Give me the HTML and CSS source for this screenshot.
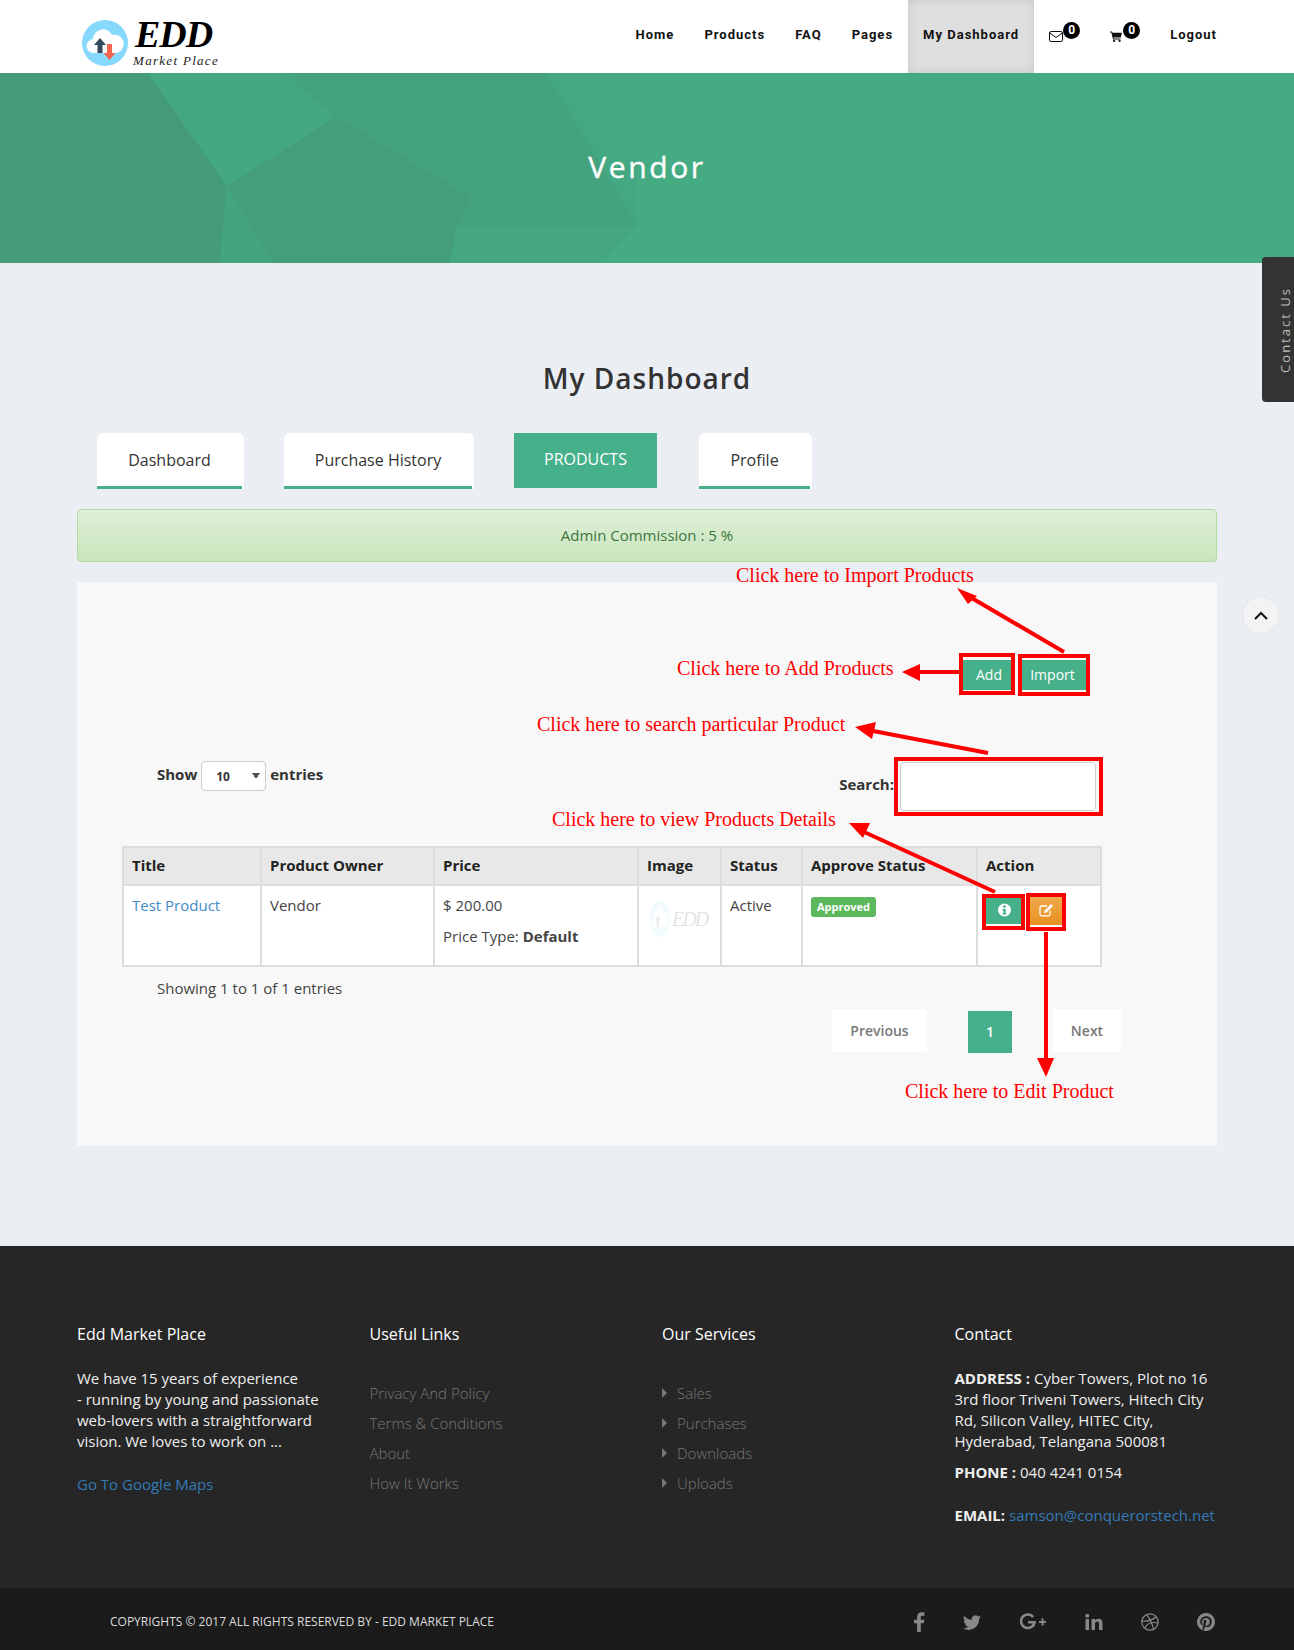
FILE: index.html
```html
<!DOCTYPE html>
<html>
<head>
	<title>EDD Market Place - Vendor</title>
	<link rel="stylesheet" href="styles.css">
</head>
<body>
	<header class="topbar">
		<a class="logo">
			<svg class="logo-mark" viewBox="0 0 46 46">
				<circle cx="23" cy="23" r="23" fill="#87d8fd"/>
				<path d="M12 33a7 7 0 0 1-1-14 10 10 0 0 1 19-4 9 9 0 0 1 5 18z" fill="#fff"/>
				<path d="M18 18l6 7h-3.500v8h-5v-8H12z" fill="#34495e"/>
				<path d="M25 24h5v9h3.500l-6 7-6-7H25z" fill="#f4644f"/>
			</svg>
			<span class="logo-text">
				<span class="logo-name">EDD</span>
				<span class="logo-sub">Market Place</span>
			</span>
		</a>
		<nav class="menu">
			<a class="menu-link">Home</a>
			<a class="menu-link">Products</a>
			<a class="menu-link">FAQ</a>
			<a class="menu-link">Pages</a>
			<a class="menu-link active">My Dashboard</a>
			<a class="menu-link">
				<svg class="menu-icon" viewBox="0 0 14 11"><rect x=".5" y=".5" width="13" height="10" rx="1.500" fill="none" stroke="#111"/><path d="M.8 2l6.200 4.500L13.200 2" fill="none" stroke="#111"/></svg>
				<span class="count count-mail">0</span>
			</a>
			<a class="menu-link">
				<svg class="menu-icon" viewBox="0 0 13 12" preserveAspectRatio="xMinYMid"><path d="M0 .5h2.300l.4 1.500H13l-1.200 5H3.900l.3 1.200h7.300v1H3.300L1.500 1.500H0z" fill="#111"/><circle cx="4.500" cy="10.800" r="1.200" fill="#111"/><circle cx="10.500" cy="10.800" r="1.200" fill="#111"/></svg>
				<span class="count count-cart">0</span>
			</a>
			<a class="menu-link">Logout</a>
		</nav>
	</header>

	<section class="hero">
		<svg class="hero-bg" viewBox="0 0 1294 190" preserveAspectRatio="none">
			<polygon points="0,0 148,0 227,113 220,190 0,190" fill="#459a79"/>
			<polygon points="148,0 285,0 336,44 227,113" fill="#43a880"/>
			<polygon points="227,113 220,190 273,190" fill="#43a47f"/>
			<polygon points="227,113 336,44 470,124 457,153 450,190 273,190" fill="#449d7b"/>
			<polygon points="285,0 546,0 638,153 457,153 470,124 336,44" fill="#44a27e"/>
			<polygon points="457,153 638,153 600,190 450,190" fill="#44a781"/>
			<polygon points="546,0 640,0 636,130 638,153" fill="#44a983"/>
		</svg>
		<h1 class="hero-title">Vendor</h1>
	</section>

	<main class="content">
		<h2 class="page-title">My Dashboard</h2>

		<div class="tabs">
			<a class="tab tab-dash">Dashboard</a>
			<a class="tab tab-history">Purchase History</a>
			<a class="tab-current">PRODUCTS</a>
			<a class="tab tab-profile">Profile</a>
		</div>

		<div class="commission">Admin Commission : 5 %</div>

		<section class="panel">
			<div class="panel-actions">
				<a class="btn-green btn-add">Add</a>
				<a class="btn-green btn-import">Import</a>
			</div>

			<div class="table-head">
				<label class="field-label">Show
					<select class="page-size"><option>10</option></select>
					entries</label>
				<label class="field-label search-label">Search:<input class="search-box" type="text"></label>
			</div>

			<table class="products">
				<colgroup>
					<col class="c-title"><col class="c-owner"><col class="c-price"><col class="c-image"><col class="c-status"><col class="c-approve"><col class="c-action">
				</colgroup>
				<thead>
					<tr>
						<th>Title</th>
						<th>Product Owner</th>
						<th>Price</th>
						<th>Image</th>
						<th>Status</th>
						<th>Approve Status</th>
						<th>Action</th>
					</tr>
				</thead>
				<tbody>
					<tr>
						<td><a class="link">Test Product</a></td>
						<td>Vendor</td>
						<td>
							<div>$ 200.00</div>
							<div class="price-type">Price Type: <b>Default</b></div>
						</td>
						<td class="thumb-cell">
							<div class="thumb">
								<svg class="thumb-mark" viewBox="0 0 46 46" preserveAspectRatio="none"><circle cx="23" cy="23" r="23" fill="#87d8fd"/><path d="M12 33a7 7 0 0 1-1-14 10 10 0 0 1 19-4 9 9 0 0 1 5 18z" fill="#fff"/><path d="M18 18l6 7h-3.500v8h-5v-8H12z" fill="#34495e"/></svg>
								<span class="thumb-name">EDD</span>
							</div>
						</td>
						<td>Active</td>
						<td><span class="approved">Approved</span></td>
						<td>
							<div class="row-actions">
								<a class="row-btn row-info">
									<svg class="row-icon" viewBox="0 0 14 14"><circle cx="7" cy="7" r="6.500" fill="#fff"/><path d="M5.600 2.600h2.600v2.100H5.600zM5 6h3.200v4.200H9v1.400H5v-1.400h.9V7.400H5z" fill="#45b08a"/></svg>
								</a>
								<a class="row-btn row-edit">
									<svg class="row-icon" viewBox="0 0 15 14"><path d="M11 8v3a1.800 1.800 0 0 1-1.800 1.800H2.800A1.800 1.800 0 0 1 1 11V4.800A1.800 1.800 0 0 1 2.800 3H8" fill="none" stroke="#fff" stroke-width="1.300"/><path d="M5 10l.6-2.600L12 1l2 2-6.400 6.400z" fill="#fff"/></svg>
								</a>
							</div>
						</td>
					</tr>
				</tbody>
			</table>

			<p class="showing">Showing 1 to 1 of 1 entries</p>

			<div class="pager">
				<a class="page-btn page-prev">Previous</a>
				<a class="page-num">1</a>
				<a class="page-btn page-next">Next</a>
			</div>
		</section>
	</main>

	<footer class="footer">
		<div class="footer-cols">
			<div class="footer-col">
				<h4 class="footer-title">Edd Market Place</h4>
				<p class="footer-text">We have 15 years of experience<br>- running by young and passionate<br>web-lovers with a straightforward<br>vision. We loves to work on ...</p>
				<a class="footer-map">Go To Google Maps</a>
			</div>
			<div class="footer-col">
				<h4 class="footer-title">Useful Links</h4>
				<ul class="footer-list">
					<li>Privacy And Policy</li>
					<li>Terms &amp; Conditions</li>
					<li>About</li>
					<li>How It Works</li>
				</ul>
			</div>
			<div class="footer-col">
				<h4 class="footer-title">Our Services</h4>
				<ul class="footer-list services">
					<li>Sales</li>
					<li>Purchases</li>
					<li>Downloads</li>
					<li>Uploads</li>
				</ul>
			</div>
			<div class="footer-col">
				<h4 class="footer-title">Contact</h4>
				<p class="footer-text"><b>ADDRESS :</b> Cyber Towers, Plot no 16<br>3rd floor Triveni Towers, Hitech City<br>Rd, Silicon Valley, HITEC City,<br>Hyderabad, Telangana 500081</p>
				<p class="footer-text phone"><b>PHONE :</b> 040 4241 0154</p>
				<p class="footer-text email"><b>EMAIL:</b> <a class="footer-mail">samson@conquerorstech.net</a></p>
			</div>
		</div>
		<div class="footer-bottom">
			<span class="copyright">COPYRIGHTS © 2017 ALL RIGHTS RESERVED BY - EDD MARKET PLACE</span>
			<div class="social">
				<svg class="soc soc-f" viewBox="0 0 10 17"><path d="M6.500 17V9.500h2.600l.4-3H6.500V4.700c0-.9.300-1.500 1.500-1.500h1.600V.5C9.300.4 8.400.3 7.300.3 5 .3 3.400 1.700 3.400 4.300v2.200H.8v3h2.600V17z"/></svg>
				<svg class="soc soc-t" viewBox="0 0 16 16"><path d="M5.026 15c6.038 0 9.341-5.003 9.341-9.334 0-.14 0-.282-.006-.422A6.685 6.685 0 0 0 16 3.542a6.658 6.658 0 0 1-1.889.518 3.301 3.301 0 0 0 1.447-1.817 6.533 6.533 0 0 1-2.087.793A3.286 3.286 0 0 0 7.875 6.030a9.325 9.325 0 0 1-6.767-3.429 3.289 3.289 0 0 0 1.018 4.382A3.323 3.323 0 0 1 .64 6.575v.045a3.288 3.288 0 0 0 2.632 3.218 3.203 3.203 0 0 1-.865.115 3.230 3.230 0 0 1-.614-.057 3.283 3.283 0 0 0 3.067 2.277A6.588 6.588 0 0 1 .78 13.580a6.320 6.320 0 0 1-.78-.045A9.344 9.344 0 0 0 5.026 15z"/></svg>
				<svg class="soc soc-g" viewBox="0 0 27 17"><path d="M13.200 3.500A6.800 6.800 0 1 0 14.600 8.800H8" fill="none" stroke="#888" stroke-width="2.500"/><path d="M19 8.500h7M22.500 5v7" fill="none" stroke="#888" stroke-width="2"/></svg>
				<svg class="soc soc-in" viewBox="0 0 18 17"><rect x=".5" y="5.500" width="3.500" height="11"/><circle cx="2.250" cy="2.200" r="2"/><path d="M6.500 5.500H10V7c.6-1 1.800-1.800 3.500-1.800 3 0 4 1.900 4 4.800v6.500H14v-6c0-1.400-.4-2.400-1.800-2.400-1.500 0-2.200 1.100-2.200 2.500v5.900H6.500z"/></svg>
				<svg class="soc soc-d" viewBox="0 0 18 18"><g fill="none" stroke="#888" stroke-width="1.200"><circle cx="9" cy="9" r="8.200"/><path d="M5.500 1.700c3 3.500 6 9 7 15"/><path d="M1 8.200c5 .3 10-.6 13.500-4.200"/><path d="M3.700 15c2-4 6.500-6.500 13.300-5"/></g></svg>
				<svg class="soc soc-p" viewBox="0 0 16 16"><path d="M8 0a8 8 0 0 0-2.915 15.452c-.07-.633-.134-1.606.027-2.297.146-.625.938-3.977.938-3.977s-.239-.479-.239-1.187c0-1.113.645-1.943 1.448-1.943.682 0 1.012.512 1.012 1.127 0 .686-.437 1.712-.663 2.663-.188.796.4 1.446 1.185 1.446 1.422 0 2.515-1.500 2.515-3.664 0-1.915-1.377-3.254-3.342-3.254-2.276 0-3.612 1.707-3.612 3.471 0 .688.265 1.425.595 1.826a.24.24 0 0 1 .056.23c-.061.252-.196.796-.222.907-.035.146-.116.177-.268.107-1-.465-1.624-1.926-1.624-3.100 0-2.523 1.834-4.840 5.286-4.840 2.775 0 4.932 1.977 4.932 4.620 0 2.757-1.739 4.976-4.151 4.976-.811 0-1.573-.421-1.834-.919l-.498 1.902c-.181.695-.669 1.566-.995 2.097A8 8 0 1 0 8 0z"/></svg>
			</div>
		</div>
	</footer>

	<!-- floating bits -->
	<a class="contact-tab"><span class="contact-label">Contact Us</span></a>
	<a class="to-top">
		<svg class="to-top-icon" viewBox="0 0 14 9"><path d="M1 8l6-6 6 6" fill="none" stroke="#111" stroke-width="2"/></svg>
	</a>

	<!-- red annotations drawn over the screenshot -->
	<svg class="marks" viewBox="0 0 1294 1650">
		<g fill="none" stroke="#f00" stroke-width="4">
			<rect x="961" y="655" width="52" height="38"/>
			<rect x="1020" y="656" width="68" height="38"/>
			<rect x="896" y="759" width="205" height="55"/>
			<rect x="984" y="896" width="39" height="32"/>
			<rect x="1028" y="895" width="36" height="34"/>
			<path d="M1064 652L970 597"/>
			<path d="M959 672H915"/>
			<path d="M988 753L868 730"/>
			<path d="M995 892L862 831"/>
			<path d="M1046 932V1060"/>
		</g>
		<g fill="#f00">
			<polygon points="957,588 977,596 968,604"/>
			<polygon points="902,672 920,664 920,681"/>
			<polygon points="855,727 876,722 872,739"/>
			<polygon points="849,823 870,823 863,838"/>
			<polygon points="1046,1077 1037,1058 1054,1058"/>
		</g>
	</svg>
	<span class="note note-import">Click here to Import Products</span>
	<span class="note note-add">Click here to Add Products</span>
	<span class="note note-search">Click here to search particular Product</span>
	<span class="note note-view">Click here to view Products Details</span>
	<span class="note note-edit">Click here to Edit Product</span>
</body>
</html>
```

FILE: styles.css
```css
* {
	box-sizing: border-box;
}

body {
	background-color: #ebeef3;
	color: #444;
	font-family: "Open Sans", sans-serif;
	font-size: 15px;
	margin: 0;
	position: relative;
	width: 1294px;
}

/* header */
.topbar {
	align-items: stretch;
	background-color: #fff;
	display: flex;
	height: 73px;
	justify-content: space-between;
	padding: 0 62px 0 82px;
}

.logo {
	align-items: flex-start;
	display: flex;
	gap: 6px;
	padding-top: 20px;
}

.logo-mark {
	height: 46px;
	width: 46px;
}

.logo-text {
	display: flex;
	flex-direction: column;
	margin-left: 4px;
	margin-top: -2px;
}

.logo-name {
	color: #000;
	font-family: "Liberation Serif", serif;
	font-size: 38px;
	font-style: italic;
	font-weight: bold;
	letter-spacing: -1px;
	line-height: 37px;
	margin-left: -3px;
	margin-top: -2px;
}

.logo-sub {
	color: #222;
	font-family: "Liberation Serif", serif;
	font-size: 13px;
	font-style: italic;
	letter-spacing: 1.300px;
	line-height: 16px;
	margin-left: -5px;
	white-space: nowrap;
}

.menu {
	display: flex;
}

.menu-link {
	align-items: center;
	color: #111;
	display: flex;
	font-family: Roboto, sans-serif;
	font-size: 13px;
	font-weight: bold;
	letter-spacing: 1px;
	padding: 0 15px 4px;
}

.menu-link.active {
	background-color: #dedede;
	box-shadow: inset 0 0 8px rgba(0,0,0,0.1);
}

.menu-icon {
	height: 11px;
	margin-top: 3px;
	width: 14px;
}

.count {
	background-color: #000;
	border-radius: 9px;
	color: #fff;
	font-size: 12px;
	height: 17px;
	letter-spacing: 0;
	line-height: 17px;
	margin-bottom: 9px;
	text-align: center;
	width: 17px;
}

.count-cart {
	margin-left: -1px;
}

/* banner */
.hero {
	background-color: #44ab83;
	height: 190px;
	overflow: hidden;
	position: relative;
}

.hero-bg {
	height: 100%;
	left: 0;
	position: absolute;
	top: 0;
	width: 100%;
}

.hero-title {
	-webkit-text-stroke: 0.4px #fff;
	color: #fff;
	font-size: 30px;
	font-weight: 400;
	letter-spacing: 2.600px;
	line-height: 40px;
	margin: 0;
	padding-top: 74px;
	position: relative;
	text-align: center;
}

/* dashboard */
.content {
	padding: 0 77px 100px;
}

.page-title {
	color: #333;
	font-size: 28px;
	font-weight: 600;
	letter-spacing: 1px;
	line-height: 40px;
	margin: 0;
	padding-top: 95px;
	text-align: center;
}

.tabs {
	align-items: flex-start;
	display: flex;
	margin-top: 35px;
	padding-left: 20px;
}

.tab {
	background-color: #fff;
	border-radius: 6px 6px 0 0;
	color: #333;
	font-size: 16px;
	height: 56px;
	line-height: 54px;
	padding-right: 2px;
	position: relative;
	text-align: center;
}

.tab::after {
	background-color: #45b08a;
	bottom: 0;
	content: "";
	height: 3px;
	left: 0;
	position: absolute;
	right: 2px;
}

.tab-dash {
	margin-right: 40px;
	width: 147px;
}

.tab-history {
	margin-right: 40px;
	width: 190px;
}

.tab-current {
	background-color: #45b08a;
	color: #fff;
	font-size: 16px;
	height: 55px;
	line-height: 52px;
	margin-right: 42px;
	text-align: center;
	width: 143px;
}

.tab-profile {
	width: 113px;
}

.commission {
	background-image: linear-gradient(#dff0d8, #c8e5bc);
	border: 1px solid #b2dba1;
	border-radius: 4px;
	color: #3c763d;
	height: 53px;
	line-height: 51px;
	margin-top: 20px;
	text-align: center;
}

.panel {
	background-color: #f8f8f8;
	height: 564px;
	margin-top: 20px;
}

.panel-actions {
	display: flex;
	gap: 10px;
	justify-content: flex-end;
	padding: 77px 131px 0 0;
}

.btn-green {
	background-color: #45b08a;
	border-bottom: 1px solid #fff;
	border-top: 1px solid #fff;
	color: #fff;
	font-size: 14px;
	height: 32px;
	line-height: 30px;
	text-align: center;
}

.btn-add {
	padding-left: 3px;
	width: 49px;
}

.btn-import {
	padding-right: 3px;
	width: 64px;
}

.table-head {
	align-items: flex-start;
	display: flex;
	justify-content: space-between;
	margin-top: 70px;
	padding: 0 121px 0 80px;
}

.field-label {
	align-items: center;
	color: #333;
	display: flex;
	font-weight: bold;
	gap: 4px;
	height: 30px;
	margin-top: -2px;
}

.search-label {
	gap: 0;
	height: 49px;
}

.page-size {
	appearance: none;
	background-color: #fff;
	background-image: linear-gradient(to top right, transparent 50%, #555 50%), linear-gradient(to top left, transparent 50%, #555 50%);
	background-position: 50px 11px, 54px 11px;
	background-repeat: no-repeat;
	background-size: 4px 6px;
	border: 1px solid #ccc;
	border-radius: 4px;
	color: #333;
	font-family: "Open Sans", sans-serif;
	font-size: 12px;
	font-weight: bold;
	height: 30px;
	margin-top: 4px;
	padding-left: 14px;
	width: 65px;
}

.search-box {
	background-color: #fff;
	border: 1px solid #ccc;
	border-radius: 4px;
	height: 49px;
	margin-left: 6px;
	margin-top: 6px;
	width: 196px;
}

.products {
	border-collapse: collapse;
	margin: 38px 0 0 45px;
	table-layout: fixed;
	width: 978px;
}

.c-title { width: 138px; }
.c-owner { width: 173px; }
.c-price { width: 204px; }
.c-image { width: 83px; }
.c-status { width: 81px; }
.c-approve { width: 175px; }
.c-action { width: 124px; }

.products th,
.products td {
	border: 2px solid #ddd;
	padding: 0 8px;
	text-align: left;
}

.products th {
	background-color: #e8e8e8;
	color: #222;
	font-weight: bold;
	height: 38px;
	padding-bottom: 2px;
}

.products td {
	background-color: #fff;
	height: 81px;
	line-height: 20px;
	padding-top: 9px;
	vertical-align: top;
}

.link {
	color: #428bca;
}

.price-type {
	margin-top: 11px;
}

.thumb {
	align-items: center;
	display: flex;
	gap: 2px;
	margin-top: 6px;
	opacity: 0.1;
}

.thumb-mark {
	height: 36px;
	width: 20px;
}

.thumb-name {
	color: #000;
	font-family: "Liberation Serif", serif;
	font-size: 20px;
	font-style: italic;
	letter-spacing: -2px;
}

.products .thumb-cell {
	padding-left: 11px;
	padding-right: 0;
}

.approved {
	background-color: #5cb85c;
	border-radius: 3px;
	color: #fff;
	display: block;
	font-size: 11px;
	font-weight: bold;
	height: 20px;
	line-height: 20px;
	margin-top: 2px;
	text-align: center;
	width: 65px;
}

.row-actions {
	align-items: center;
	display: flex;
	gap: 7px;
}

.row-btn {
	align-items: center;
	display: flex;
	justify-content: center;
}

.row-info {
	background-color: #45b08a;
	height: 28px;
	width: 37px;
}

.row-edit {
	background-image: linear-gradient(#f0ab50, #e8901d);
	height: 30px;
	width: 32px;
}

.row-icon {
	height: 14px;
	width: 15px;
}

.showing {
	color: #444;
	line-height: 20px;
	margin: 11px 0 0;
	padding-left: 80px;
}

.pager {
	align-items: flex-start;
	display: flex;
	gap: 41px;
	justify-content: flex-end;
	margin-top: 11px;
	padding-right: 96px;
}

.page-btn {
	background-color: #fff;
	color: #777;
	font-size: 14px;
	font-weight: 600;
	height: 43px;
	line-height: 43px;
	text-align: center;
}

.page-prev {
	width: 95px;
}

.page-next {
	width: 68px;
}

.page-num {
	background-color: #45b08a;
	color: #fff;
	font-size: 14px;
	font-weight: 600;
	height: 42px;
	line-height: 42px;
	margin-top: 2px;
	text-align: center;
	width: 44px;
}

/* footer */
.footer {
	background-color: #262626;
	color: #eee;
}

.footer-cols {
	display: grid;
	grid-template-columns: repeat(4, 292.5px);
	height: 342px;
	padding: 77px 0 0 77px;
}

.footer-col {
	padding-right: 30px;
}

.footer-title {
	color: #fff;
	font-size: 16px;
	font-weight: normal;
	line-height: 22px;
	margin: 0;
}

.footer-text {
	line-height: 21px;
	margin: 23px 0 0;
	white-space: nowrap;
}

.phone {
	margin-top: 10px;
}

.email {
	margin-top: 22px;
}

.footer-map,
.footer-mail {
	color: #337ab7;
}

.footer-map {
	display: block;
	line-height: 21px;
	margin-top: 22px;
}

.footer-list {
	color: #777;
	font-weight: 300;
	list-style: none;
	margin: 33px 0 0;
	padding: 0;
}

.footer-list li {
	height: 30px;
	line-height: 30px;
}

.services li {
	padding-left: 15px;
	position: relative;
}

.services li::before {
	border-bottom: 5px solid transparent;
	border-left: 5px solid #777;
	border-top: 5px solid transparent;
	content: "";
	left: 0;
	position: absolute;
	top: 10px;
}

.footer-bottom {
	align-items: center;
	background-color: #1b1b1b;
	display: flex;
	height: 62px;
	justify-content: space-between;
	padding: 5px 79px 0 110px;
}

.copyright {
	color: #ddd;
	font-size: 12px;
}

.social {
	align-items: center;
	display: flex;
}

.soc {
	fill: #888;
	height: 18px;
}

.soc-f { height: 20px; margin-right: 38px; width: 12px; }
.soc-t { margin-right: 39px; width: 18px; }
.soc-g { margin-right: 38px; width: 27px; }
.soc-in { margin-right: 38px; width: 18px; }
.soc-d { margin-right: 38px; width: 18px; }
.soc-p { width: 18px; }

/* floating */
.contact-tab {
	align-items: center;
	background-color: #333;
	border-radius: 4px 0 0 4px;
	display: flex;
	height: 145px;
	justify-content: center;
	padding-left: 14px;
	position: absolute;
	right: 0;
	top: 257px;
	width: 32px;
}

.contact-label {
	color: #bbb;
	font-size: 13px;
	letter-spacing: 2px;
	transform: rotate(-90deg);
	white-space: nowrap;
}

.to-top {
	align-items: center;
	background-color: #f2f3f5;
	border: 1px solid #e6e6e6;
	border-radius: 50%;
	display: flex;
	height: 38px;
	justify-content: center;
	left: 1242px;
	position: absolute;
	top: 596px;
	width: 38px;
}

.to-top-icon {
	height: 9px;
	width: 14px;
}

/* annotations */
.marks {
	height: 1650px;
	left: 0;
	pointer-events: none;
	position: absolute;
	top: 0;
	width: 1294px;
}

.note {
	color: #f00;
	font-family: "Liberation Serif", serif;
	font-size: 20px;
	line-height: 24px;
	position: absolute;
	white-space: nowrap;
}

.note-import { left: 736px; top: 563px; }
.note-add { left: 677px; top: 656px; }
.note-search { left: 537px; top: 712px; }
.note-view { left: 552px; top: 807px; }
.note-edit { left: 905px; top: 1079px; }
```
